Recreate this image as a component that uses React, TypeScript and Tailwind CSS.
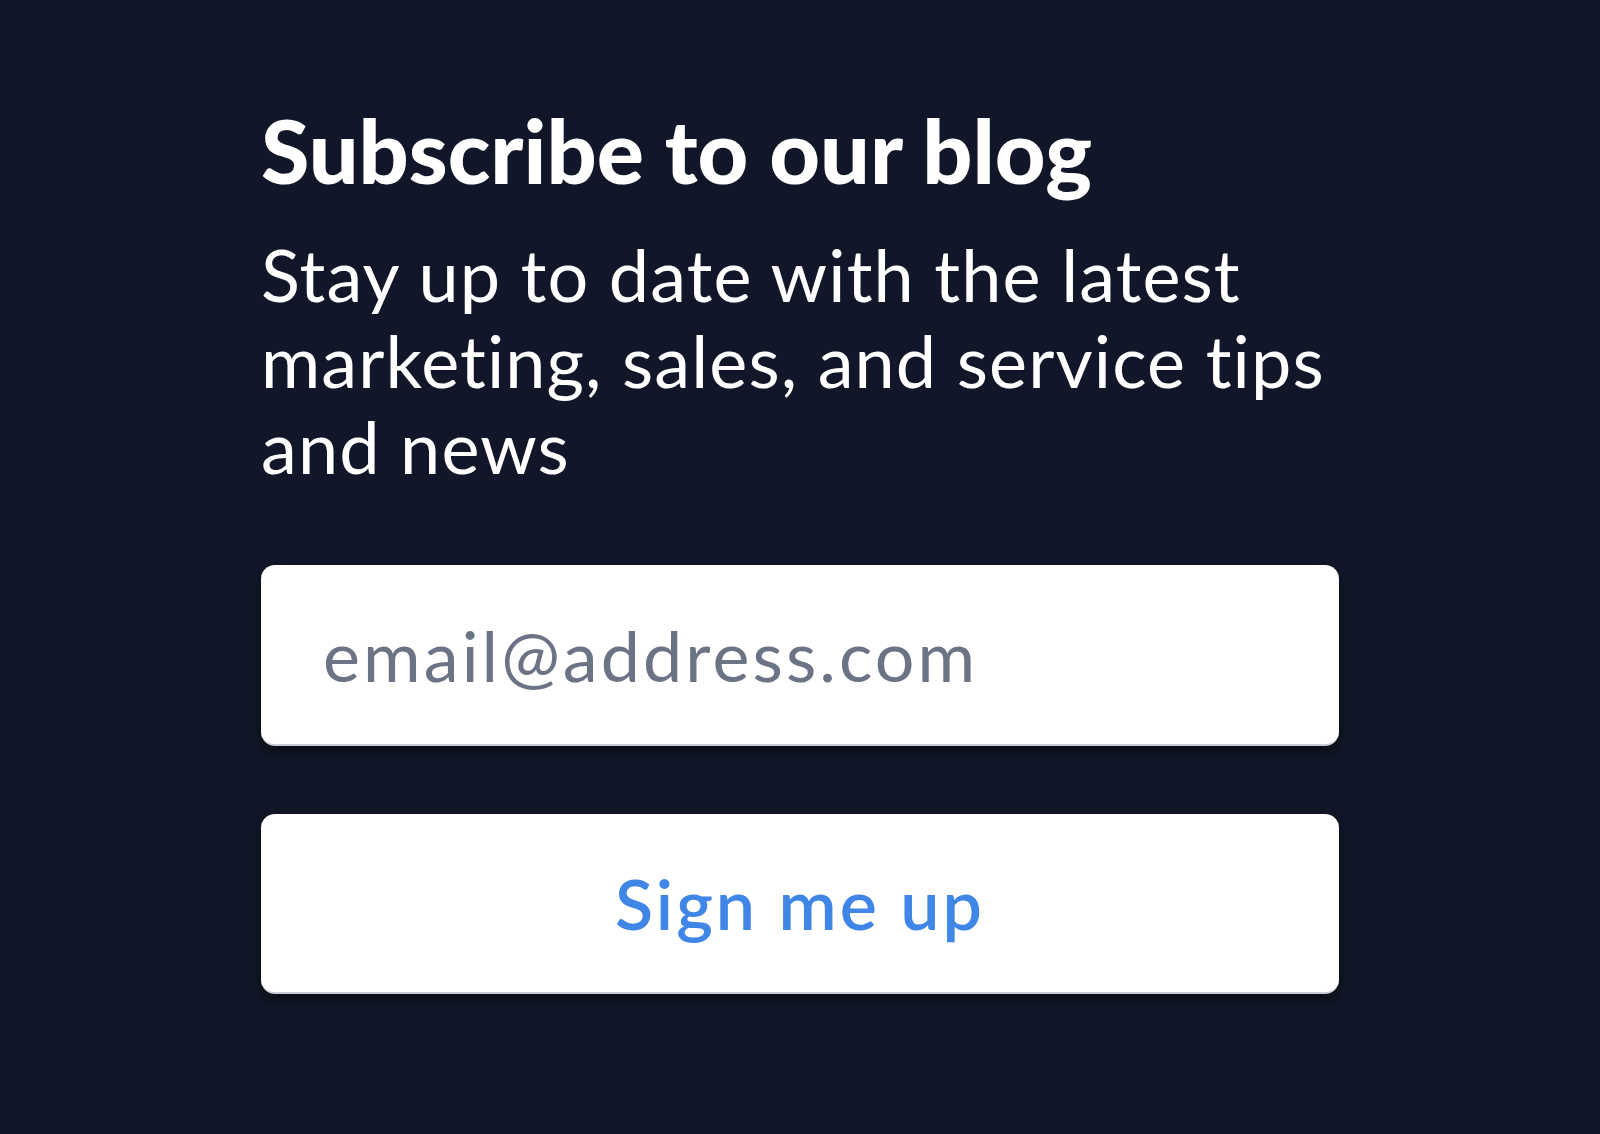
export default function App() {
  return (
    <div className="min-h-[1134px] w-full bg-[#111728] font-['Lato','Noto_Sans',sans-serif]">
      <div className="ml-[261px] w-[1078px] pt-[100px]">
        <h1 className="text-[88px] font-black leading-[100px] tracking-[0px] text-white">
          Subscribe to our blog
        </h1>
        <p className="mt-[31px] w-[1100px] text-[72px] font-normal leading-[86px] tracking-[1.1px] text-white">
          Stay up to date with the latest marketing, sales, and service tips and news
        </p>
        <form className="mt-[76px] flex flex-col gap-[68px]" onSubmit={(e) => e.preventDefault()}>
          <input
            type="email"
            placeholder="email@address.com"
            className="h-[181px] w-full rounded-[14px] border-b-2 border-[#c9ccd3] bg-white px-[62px] text-[70px] tracking-[3.1px] text-[#1f2937] shadow-[0_6px_14px_rgba(0,0,0,0.45)] outline-none placeholder:text-[#6b7385]"
          />
          <button
            type="submit"
            className="h-[180px] w-full rounded-[14px] border-b-2 border-[#c9ccd3] bg-white text-[70px] font-semibold tracking-[3px] text-[#3f86e6] shadow-[0_6px_14px_rgba(0,0,0,0.45)]"
          >
            Sign me up
          </button>
        </form>
      </div>
    </div>
  );
}
